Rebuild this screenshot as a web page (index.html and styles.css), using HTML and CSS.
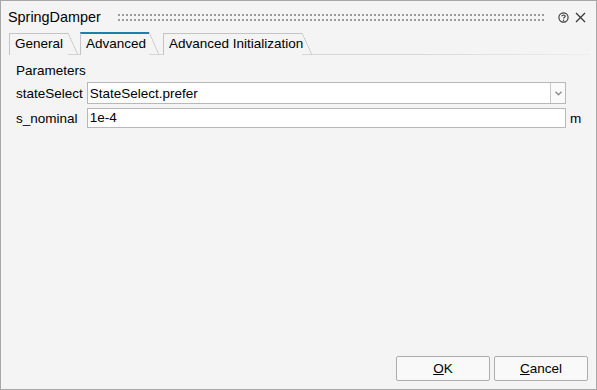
FILE: index.html
```html
<!DOCTYPE html>
<html>
<head>
<meta charset="utf-8">
<link rel="stylesheet" href="styles.css">
</head>
<body>
<div class="window">
  <div class="titlebar">
    <span class="title">SpringDamper</span>
    <span class="grip"></span>
    <span class="help">
      <svg width="11" height="11" viewBox="0 0 11 11"><circle cx="5.5" cy="5.5" r="4.6" fill="none" stroke="#333" stroke-width="1.1"/><path d="M3.9 4.3 C3.9 2.6 7.2 2.6 7.2 4.3 C7.2 5.4 5.5 5.4 5.5 6.6" fill="none" stroke="#333" stroke-width="1.1"/><circle cx="5.5" cy="8.2" r="0.7" fill="#333"/></svg>
    </span>
    <span class="close">
      <svg width="11" height="11" viewBox="0 0 11 11"><path d="M1 1 L10 10 M10 1 L1 10" stroke="#333" stroke-width="1.2"/></svg>
    </span>
  </div>
  <div class="tabs">
    <div class="tab t-general">General</div>
    <div class="tab t-adv active">Advanced</div>
    <div class="tab t-init">Advanced Initialization</div>
    <div class="tabline"></div>
  </div>
  <div class="content">
    <div class="section">Parameters</div>
    <div class="grid">
      <label class="lbl">stateSelect</label>
      <div class="combo"><span class="combo-text">StateSelect.prefer</span><span class="combo-btn"><svg width="7" height="5" viewBox="0 0 7 5"><path d="M0.5 0.8 L3.5 3.8 L6.5 0.8" fill="none" stroke="#8a8a8a" stroke-width="1.4"/></svg></span></div>
      <span class="unit"></span>
      <label class="lbl">s_nominal</label>
      <div class="input">1e-4</div>
      <span class="unit">m</span>
    </div>
  </div>
  <div class="footer">
    <button class="btn"><u>O</u>K</button>
    <button class="btn"><u>C</u>ancel</button>
  </div>
</div>
</body>
</html>
```
FILE: styles.css
```css
html, body {
  margin: 0;
  padding: 0;
}
body {
  font-family: "Liberation Sans", Arial, sans-serif;
  color: #000;
  background: #fff;
}
.window {
  width: 597px;
  height: 390px;
  box-sizing: border-box;
  border: 1px solid #a8a8a8;
  background: #f4f4f4;
  display: flex;
  flex-direction: column;
}
.titlebar {
  height: 30px;
  display: flex;
  align-items: center;
  padding-left: 7px;
  padding-right: 10px;
  box-sizing: border-box;
}
.title {
  font-size: 14.4px;
  padding-top: 2px;
  white-space: nowrap;
}
.grip {
  flex: 1;
  height: 7px;
  margin: 2px 8px 0 17px;
  background-image:
    linear-gradient(to right, transparent 2px, #f4f4f4 2px),
    linear-gradient(to bottom, #9c9c9c 2px, transparent 2px);
  background-size: 4px 5px, 4px 5px;
  background-position: 0 0, 0 0;
}
.help {
  display: flex;
  margin-left: 4px;
  margin-top: 3px;
}
.close {
  display: flex;
  margin-left: 6px;
  margin-top: 3px;
}
.tabs {
  display: flex;
  align-items: flex-end;
  height: 24px;
  padding-left: 8px;
  padding-right: 6px;
  position: relative;
}
.tab {
  position: relative;
  height: 22px;
  box-sizing: border-box;
  font-size: 13.5px;
  line-height: 20px;
  padding-left: 5px;
  white-space: nowrap;
  border-left: 1px solid #c4c4c4;
  border-top: 1px solid #c4c4c4;
  background: #f4f4f4;
  z-index: 1;
}
.tab::after {
  content: "";
  position: absolute;
  top: -1px;
  right: -10px;
  width: 10px;
  height: 22px;
  background: linear-gradient(to top right, transparent calc(50% - 0.7px), #c4c4c4 50%, transparent calc(50% + 0.7px));
}
.t-general { width: 59px; margin-right: 12px; }
.t-adv { width: 69px; margin-right: 14px; }
.t-init { width: 139px; }
.tab.active {
  border-top: 2px solid #1f7fa9;
  height: 23px;
  line-height: 20px;
  border-left-color: #c4c4c4;
}
.tab.active::after {
  top: -2px;
  height: 23px;
}
.tabline {
  position: absolute;
  left: 8px;
  right: 6px;
  bottom: 0;
  height: 1px;
  background: linear-gradient(to right, #d4d4d4, #d8d8d8 70%, #eeeeee);
}
.content {
  padding: 9px 15px 0 15px;
}
.section {
  font-size: 13.5px;
  line-height: 14px;
  margin-bottom: 4px;
}
.grid {
  display: grid;
  grid-template-columns: auto 1fr auto;
  column-gap: 4px;
  row-gap: 4px;
  align-items: center;
}
.lbl {
  font-size: 13.5px;
  white-space: nowrap;
}
.combo {
  height: 22px;
  box-sizing: border-box;
  border: 1px solid #b8b8b8;
  background: #fff;
  display: flex;
  align-items: center;
  font-size: 13.5px;
}
.combo-text {
  flex: 1;
  padding-left: 2px;
  white-space: nowrap;
}
.combo-btn {
  width: 15px;
  height: 20px;
  border-left: 1px solid #c8c8c8;
  box-sizing: border-box;
  display: flex;
  align-items: center;
  justify-content: center;
  background: #fafafa;
}
.input {
  height: 20px;
  box-sizing: border-box;
  border: 1px solid #b8b8b8;
  background: #fff;
  font-size: 13.5px;
  line-height: 18px;
  padding-left: 2px;
}
.unit {
  font-size: 13.5px;
  width: 11px;
}
.footer {
  margin-top: auto;
  display: flex;
  justify-content: flex-end;
  gap: 4px;
  padding: 0 8px 8px 0;
}
.btn {
  width: 94px;
  height: 25px;
  box-sizing: border-box;
  border: 1px solid #adadad;
  border-radius: 2px;
  background: #f9f9f9;
  font-family: "Liberation Sans", Arial, sans-serif;
  font-size: 13.5px;
  color: #000;
  padding: 0;
}
```
